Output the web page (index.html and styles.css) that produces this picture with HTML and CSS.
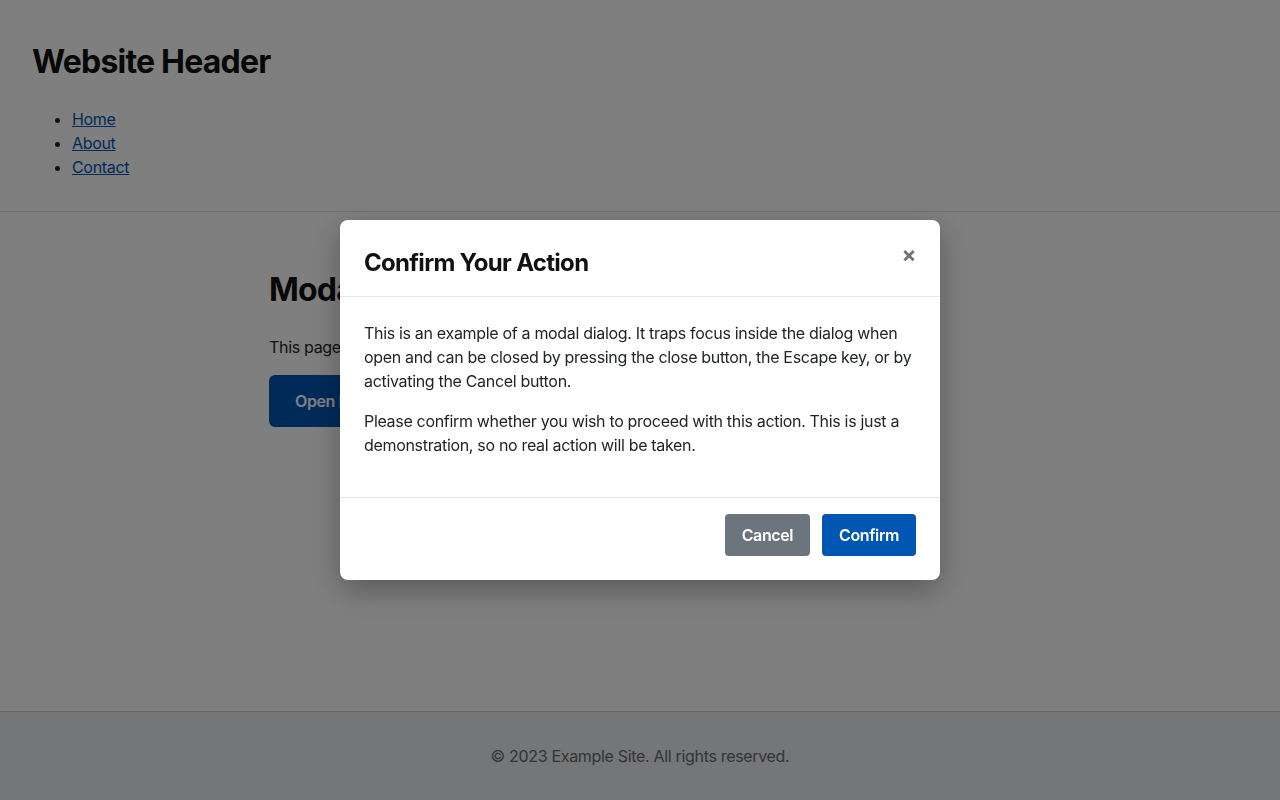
FILE: index.html
```html
<!DOCTYPE html>
<html lang="en">
<head>
<meta charset="utf-8">
<title>Modal Dialog Example</title>
<link rel="stylesheet" href="styles.css">
</head>
<body>
  <header class="site-header">
    <h1 class="site-title">Website Header</h1>
    <nav>
      <ul class="nav-list">
        <li><a href="#">Home</a></li>
        <li><a href="#">About</a></li>
        <li><a href="#">Contact</a></li>
      </ul>
    </nav>
  </header>

  <main class="site-main">
    <h2 class="page-title">Modal Dialog Example</h2>
    <p class="page-text">This page demonstrates an accessible modal dialog. Click the button below to open it.</p>
    <button class="btn btn-open" type="button">Open Modal</button>
  </main>

  <footer class="site-footer">
    <p>&copy; 2023 Example Site. All rights reserved.</p>
  </footer>

  <div class="overlay">
    <div class="modal" role="dialog" aria-modal="true" aria-labelledby="modal-title">
      <div class="modal-header">
        <h2 id="modal-title" class="modal-title">Confirm Your Action</h2>
        <button class="modal-close" type="button" aria-label="Close">&times;</button>
      </div>
      <div class="modal-body">
        <p>This is an example of a modal dialog. It traps focus inside the dialog when open and can be closed by pressing the close button, the Escape key, or by activating the Cancel button.</p>
        <p>Please confirm whether you wish to proceed with this action. This is just a demonstration, so no real action will be taken.</p>
      </div>
      <div class="modal-footer">
        <button class="btn btn-secondary" type="button">Cancel</button>
        <button class="btn btn-primary" type="button">Confirm</button>
      </div>
    </div>
  </div>
</body>
</html>
```

FILE: styles.css
```css
* {
  box-sizing: border-box;
}

html, body {
  height: 100%;
}

body {
  margin: 0;
  font-family: Inter, "Liberation Sans", sans-serif;
  font-size: 16px;
  line-height: 1.5;
  letter-spacing: -0.32px;
  color: #212529;
  background: #ffffff;
  display: flex;
  flex-direction: column;
}

/* Page header */
.site-header {
  padding: 16px 32px;
  border-bottom: 1px solid #dee2e6;
}

.site-title {
  margin: 22px 0 21px;
  font-size: 32px;
  font-weight: 700;
  color: #111111;
  letter-spacing: -0.8px;
}

.nav-list {
  margin: 0 0 16px;
  padding-left: 40px;
}

.nav-list a {
  color: #0056b3;
}

/* Main content */
.site-main {
  flex: 1;
  width: 100%;
  max-width: 742px;
  margin: 0 auto;
  padding-top: 32px;
}

.page-title {
  margin: 27px 0 26px;
  font-size: 32px;
  line-height: 1.2;
  font-weight: 700;
  color: #111111;
  letter-spacing: -0.8px;
}

.page-text {
  margin: 0 0 16px;
}

/* Buttons */
.btn {
  font-family: inherit;
  font-size: 16px;
  font-weight: 600;
  line-height: 24px;
  letter-spacing: -0.4px;
  border: 1px solid transparent;
  border-radius: 4px;
  padding: 8px 16px;
  color: #ffffff;
  cursor: pointer;
}

.btn-open {
  padding: 13px 25px;
  background: #0056b3;
  border-radius: 6px;
}

.btn-primary {
  background: #0056b3;
}

.btn-secondary {
  background: #6c757d;
}

/* Page footer */
.site-footer {
  padding: 32px;
  background: #e9ecef;
  border-top: 1px solid #c9ced3;
  text-align: center;
  color: #66696c;
}

.site-footer p {
  margin: 0;
}

/* Modal */
.overlay {
  position: fixed;
  inset: 0;
  background: rgba(0, 0, 0, 0.5);
  display: flex;
  align-items: center;
  justify-content: center;
}

.modal {
  width: 600px;
  background: #ffffff;
  border-radius: 8px;
  box-shadow: 0 10px 30px rgba(0, 0, 0, 0.3);
}

.modal-header {
  position: relative;
  padding: 25px 24px 15px;
  border-bottom: 1px solid #e5e7ea;
}

.modal-title {
  margin: 0;
  font-size: 24px;
  line-height: 36px;
  font-weight: 700;
  color: #111111;
  letter-spacing: -0.7px;
}

.modal-close {
  position: absolute;
  top: 22px;
  right: 19px;
  width: 24px;
  height: 24px;
  padding: 0;
  border: none;
  background: none;
  font-family: inherit;
  font-size: 22px;
  font-weight: 700;
  line-height: 24px;
  color: #6c757d;
  cursor: pointer;
}

.modal-body {
  padding: 24px;
}

.modal-body p {
  margin: 0 0 16px;
}

.modal-footer {
  display: flex;
  justify-content: flex-end;
  gap: 12px;
  padding: 16px 24px 24px;
  border-top: 1px solid #e5e7ea;
}
```
